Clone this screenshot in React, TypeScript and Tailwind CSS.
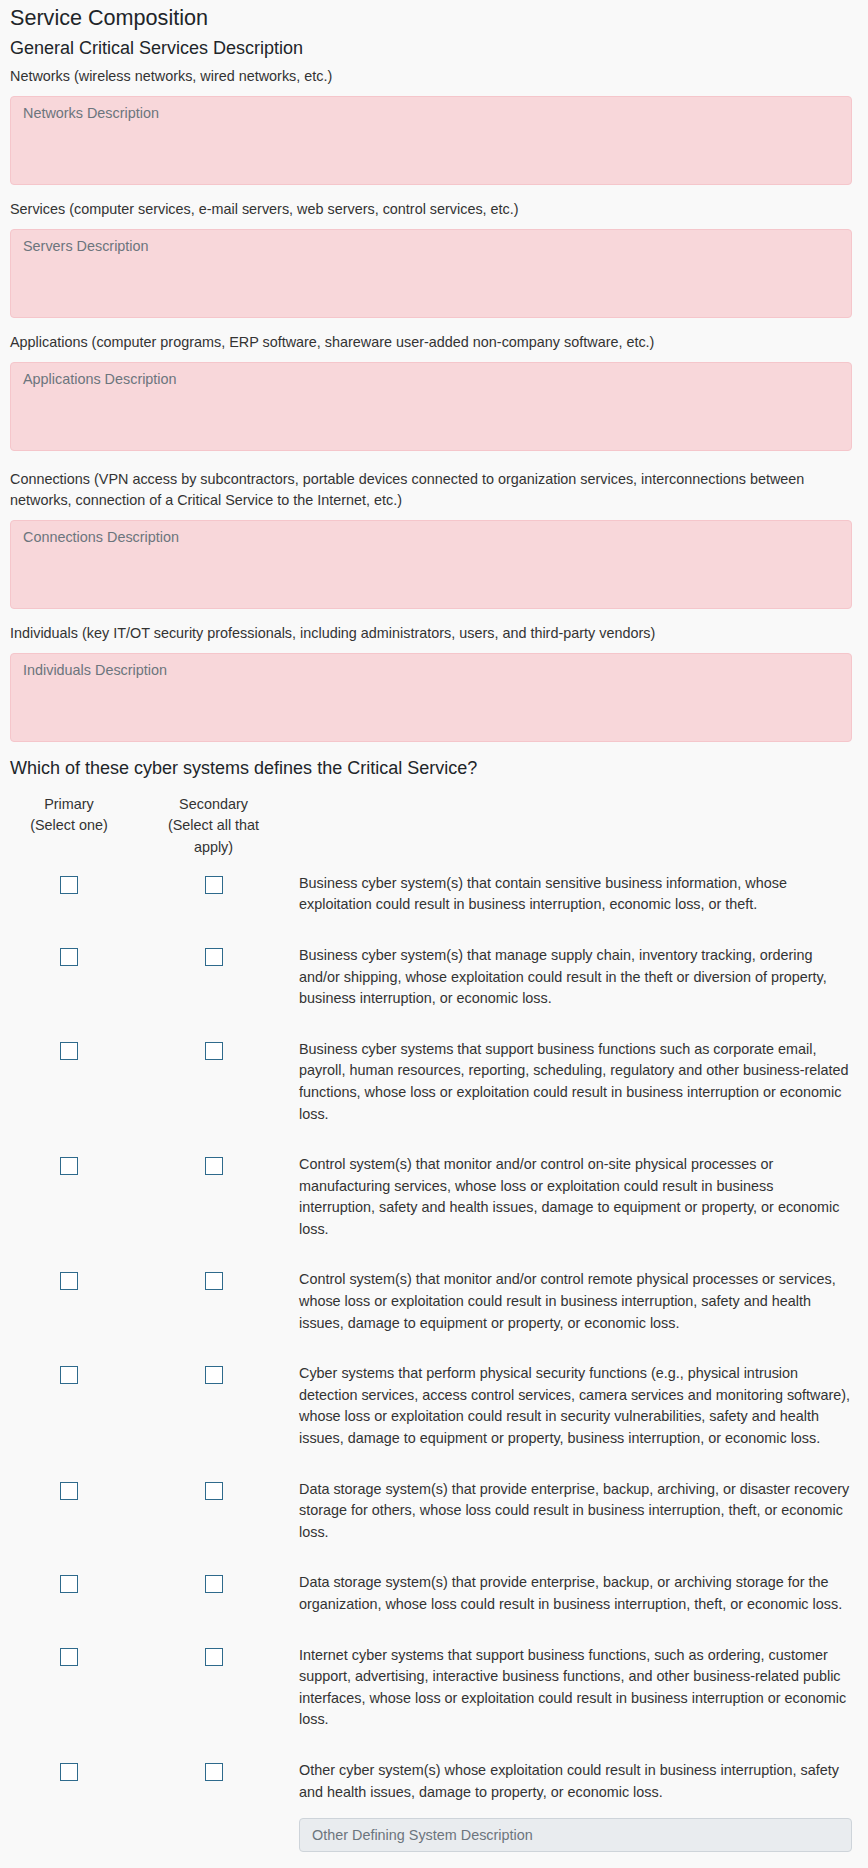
import React from "react";

const fields: { label: string[]; ph: string; mt: string }[] = [
  { label: ["Networks (wireless networks, wired networks, etc.)"], ph: "Networks Description", mt: "mt-[6px]" },
  { label: ["Services (computer services, e-mail servers, web servers, control services, etc.)"], ph: "Servers Description", mt: "mt-[14px]" },
  { label: ["Applications (computer programs, ERP software, shareware user-added non-company software, etc.)"], ph: "Applications Description", mt: "mt-[14px]" },
  {
    label: [
      "Connections (VPN access by subcontractors, portable devices connected to organization services, interconnections between",
      "networks, connection of a Critical Service to the Internet, etc.)",
    ],
    ph: "Connections Description",
    mt: "mt-[18px]",
  },
  { label: ["Individuals (key IT/OT security professionals, including administrators, users, and third-party vendors)"], ph: "Individuals Description", mt: "mt-[14px]" },
];

const systems: string[][] = [
  [
    "Business cyber system(s) that contain sensitive business information, whose",
    "exploitation could result in business interruption, economic loss, or theft.",
  ],
  [
    "Business cyber system(s) that manage supply chain, inventory tracking, ordering",
    "and/or shipping, whose exploitation could result in the theft or diversion of property,",
    "business interruption, or economic loss.",
  ],
  [
    "Business cyber systems that support business functions such as corporate email,",
    "payroll, human resources, reporting, scheduling, regulatory and other business-related",
    "functions, whose loss or exploitation could result in business interruption or economic",
    "loss.",
  ],
  [
    "Control system(s) that monitor and/or control on-site physical processes or",
    "manufacturing services, whose loss or exploitation could result in business",
    "interruption, safety and health issues, damage to equipment or property, or economic",
    "loss.",
  ],
  [
    "Control system(s) that monitor and/or control remote physical processes or services,",
    "whose loss or exploitation could result in business interruption, safety and health",
    "issues, damage to equipment or property, or economic loss.",
  ],
  [
    "Cyber systems that perform physical security functions (e.g., physical intrusion",
    "detection services, access control services, camera services and monitoring software),",
    "whose loss or exploitation could result in security vulnerabilities, safety and health",
    "issues, damage to equipment or property, business interruption, or economic loss.",
  ],
  [
    "Data storage system(s) that provide enterprise, backup, archiving, or disaster recovery",
    "storage for others, whose loss could result in business interruption, theft, or economic",
    "loss.",
  ],
  [
    "Data storage system(s) that provide enterprise, backup, or archiving storage for the",
    "organization, whose loss could result in business interruption, theft, or economic loss.",
  ],
  [
    "Internet cyber systems that support business functions, such as ordering, customer",
    "support, advertising, interactive business functions, and other business-related public",
    "interfaces, whose loss or exploitation could result in business interruption or economic",
    "loss.",
  ],
  [
    "Other cyber system(s) whose exploitation could result in business interruption, safety",
    "and health issues, damage to property, or economic loss.",
  ],
];

function Box() {
  return <div className="mt-[3px] h-[18px] w-[18px] border border-[#2e6a8c] bg-white" />;
}

export default function App() {
  return (
    <div className="min-h-screen bg-[#f9f9f9] pl-[10px] pr-[16px] pb-[16px] font-['Liberation_Sans',Arial,sans-serif] text-[14.4px] leading-[21.6px] text-[#333]">
      <h4 className="pt-[5px] text-[21.6px] leading-[26px] text-[#212529]">Service Composition</h4>
      <h5 className="mt-[7px] text-[18px] leading-[21.6px] text-[#212529]">General Critical Services Description</h5>
      {fields.map((f, i) => (
        <div key={i} className={f.mt}>
          <label className="block">
            {f.label.map((l, j) => (
              <span key={j} className="block whitespace-nowrap">
                {l}
              </span>
            ))}
          </label>
          <textarea
            placeholder={f.ph}
            className="mt-[8.4px] block h-[89px] w-full resize-none rounded-[4px] border border-[#f5c6cb] bg-[#f8d7da] px-[12px] py-[6px] text-[14.4px] leading-[21.6px] outline-none placeholder:text-[#6c757d]"
          />
        </div>
      ))}
      <h5 className="mt-[15.6px] text-[18px] leading-[21.6px] text-[#212529]">
        Which of these cyber systems defines the Critical Service?
      </h5>
      <div className="mt-[14.4px] grid grid-cols-[118px_171px_1fr]">
        <div className="text-center">
          <div>Primary</div>
          <div>(Select one)</div>
        </div>
        <div className="text-center">
          <div>Secondary</div>
          <div>(Select all that</div>
          <div>apply)</div>
        </div>
        <div />
      </div>
      <div className="mt-[14.3px] flex flex-col gap-[29px]">
        {systems.map((s, i) => (
          <div key={i} className="grid grid-cols-[118px_171px_1fr]">
            <div className="flex justify-center">
              <Box />
            </div>
            <div className="flex justify-center">
              <Box />
            </div>
            <div>
              <p>
                {s.map((l, j) => (
                  <span key={j} className="block whitespace-nowrap">
                    {l}
                  </span>
                ))}
              </p>
              {i === systems.length - 1 && (
                <input
                  placeholder="Other Defining System Description"
                  disabled
                  className="mt-[14.6px] block h-[34px] w-full rounded-[4px] border border-[#ced4da] bg-[#e9ecef] px-[12px] text-[14.4px] outline-none placeholder:text-[#6c757d]"
                />
              )}
            </div>
          </div>
        ))}
      </div>
    </div>
  );
}
